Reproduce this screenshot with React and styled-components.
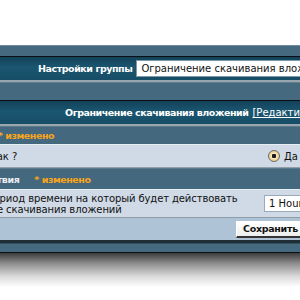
import styled, { createGlobalStyle } from "styled-components";

const GlobalStyle = createGlobalStyle`
  html, body {
    margin: 0;
    padding: 0;
    background: #ffffff;
  }
  body {
    font-family: "DejaVu Sans", Verdana, sans-serif;
    font-size: 10px;
  }
`;

const Page = styled.div`
  width: 300px;
  height: 300px;
  overflow: hidden;
  background: #ffffff;
  padding-top: 45px;
  box-sizing: border-box;
`;

const Frame = styled.div`
  width: 480px;
  margin-left: -70px;
`;

const Band = styled.div`
  height: ${({ $h }) => $h}px;
  background: #456a7f;
  border-top: 1px solid ${({ $top }) => $top || "#6f8c9d"};
  border-bottom: 1px solid #0b0f12;
`;

const TitleBar = styled.div`
  display: flex;
  align-items: center;
  gap: 4px;
  height: ${({ $h }) => $h}px;
  padding-left: ${({ $pad }) => $pad}px;
  background: linear-gradient(180deg, #124259 0%, #1b5670 45%, #174d66 100%);
  border-bottom: 2px solid #9aa6ad;
  color: #ffffff;
  white-space: nowrap;
`;

const Label = styled.span`
  font-weight: bold;
  font-size: 9.5px;
  letter-spacing: -0.45px;
`;

const TextInput = styled.div`
  height: 15px;
  line-height: 15px;
  padding: 0 4px;
  width: 300px;
  background: #ffffff;
  border: 1px solid #7d98aa;
  color: #111111;
`;

const EditLink = styled.span`
  text-decoration: underline;
`;

const CatRow = styled.div`
  display: flex;
  align-items: center;
  height: ${({ $h }) => $h}px;
  padding-left: ${({ $pad }) => $pad}px;
  background: #44687d;
  border-top: 1px solid #5b7a8c;
  color: #e8eef2;
  font-weight: bold;
  font-size: 9.5px;
  letter-spacing: -0.45px;
  white-space: nowrap;
`;

const Changed = styled.span`
  color: #f7a51c;
  margin-left: ${({ $gap }) => $gap}px;
`;

const Row = styled.div`
  display: grid;
  grid-template-columns: 332px 1fr;
  align-items: center;
  min-height: ${({ $h }) => $h}px;
  background: #cfdae6;
  border-top: 1px solid #e6edf3;
  border-bottom: 1px solid #8f9ea9;
  color: #111111;
`;

const LeftCell = styled.div`
  padding-left: ${({ $pad }) => $pad}px;
  text-indent: ${({ $indent }) => $indent || 0}px;
  line-height: 11px;
  letter-spacing: -0.1px;
  white-space: nowrap;
`;

const RightCell = styled.div`
  display: flex;
  align-items: center;
  gap: 4px;
  padding-left: ${({ $pad }) => $pad}px;
  white-space: nowrap;
`;

const Radio = styled.span`
  width: 10px;
  height: 10px;
  border-radius: 50%;
  border: 1px solid #6b6b6b;
  background: radial-gradient(circle, #1c1c1c 0 2px, #f7e9c4 2.5px, #e0b64a 100%);
`;

const Select = styled.div`
  height: 15px;
  line-height: 15px;
  width: 90px;
  padding: 0 4px;
  background: #ffffff;
  border: 1px solid #9ab;
`;

const Footer = styled.div`
  display: flex;
  align-items: center;
  gap: 6px;
  height: 22px;
  padding-left: 306px;
  background: #afc3d7;
  border-bottom: 3px solid #1e2d36;
`;

const Button = styled.div`
  height: 14px;
  line-height: 14px;
  padding: 0 6px;
  background: linear-gradient(180deg, #ffffff 0%, #eeeeee 100%);
  border-top: 1px solid #ffffff;
  border-left: 1px solid #ffffff;
  border-right: 1px solid #555555;
  border-bottom: 2px solid #333333;
  color: #111111;
  font-weight: bold;
  font-size: 9.5px;
  letter-spacing: -0.3px;
  white-space: nowrap;
`;

const Shadow = styled.div`
  height: 34px;
  background: linear-gradient(180deg, #3c3c3c 0%, #8c8c8c 30%, #dcdcdc 70%, #ffffff 100%);
`;

export default function App() {
  return (
    <>
      <GlobalStyle />
      <Page>
        <Frame>
          <Band $h={10} />
          <TitleBar $h={23} $pad={108}>
            <Label>Настройки группы</Label>
            <TextInput>Ограничение скачивания вложений</TextInput>
          </TitleBar>
          <Band $h={17} $top="#5f7e90" />
          <TitleBar $h={23} $pad={135}>
            <Label>Ограничение скачивания вложений</Label>
            <EditLink>[Редактировать]</EditLink>
          </TitleBar>
          <CatRow $h={17} $pad={12}>
            Состояние<Changed $gap={3}>* изменено</Changed>
          </CatRow>
          <Row $h={22}>
            <LeftCell $pad={7}>Включить так ?</LeftCell>
            <RightCell $pad={6}>
              <Radio />
              <span>Да</span>
              <Radio />
              <span>Нет</span>
            </RightCell>
          </Row>
          <CatRow $h={20} $pad={0}>
            Период действия<Changed $gap={15}>* изменено</Changed>
          </CatRow>
          <Row $h={27}>
            <LeftCell $pad={6} $indent={3}>
              Укажите период времени на который будет действовать
              <br />
              ограничение скачивания вложений
            </LeftCell>
            <RightCell $pad={2}>
              <Select>1 Hour</Select>
            </RightCell>
          </Row>
          <Footer>
            <Button>Сохранить</Button>
            <Button>Вернуть</Button>
          </Footer>
          <Band $h={8} $top="#33505f" />
        </Frame>
        <Shadow />
      </Page>
    </>
  );
}
